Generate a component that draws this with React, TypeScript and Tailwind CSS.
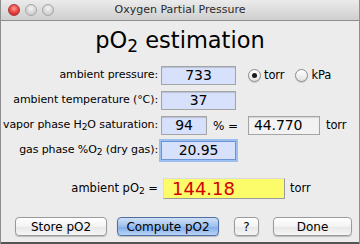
import React from "react";

const font = { fontFamily: '"DejaVu Sans", "Liberation Sans", sans-serif' };

function Light({ color }: { color: "red" | "grey" }) {
  return (
    <div
      className={
        color === "red"
          ? "w-[12px] h-[12px] rounded-full border border-[#b0373a] bg-[radial-gradient(circle_at_50%_35%,#ff9c94_0%,#e3413c_55%,#b41c1e_100%)]"
          : "w-[12px] h-[12px] rounded-full border border-[#a6a6a6] bg-[radial-gradient(circle_at_50%_35%,#f4f4f4_0%,#d4d4d4_60%,#bdbdbd_100%)]"
      }
    />
  );
}

function Field({ value, w, focus }: { value: string; w: string; focus?: boolean }) {
  return (
    <div
      className={
        "h-[19px] flex items-center justify-center text-[14px] text-black bg-[#d7e1fb] border " +
        w +
        (focus
          ? " border-[#6d95d4] shadow-[0_0_0_2px_#9cbff0]"
          : " border-[#a4a4a4] shadow-[inset_0_1px_1px_rgba(0,0,0,0.15)]")
      }
    >
      {value}
    </div>
  );
}

function Radio({ on, label }: { on?: boolean; label: string }) {
  return (
    <div className="flex items-center gap-[3px]">
      <div className="w-[13px] h-[13px] rounded-full border border-[#8b8b8b] bg-[linear-gradient(#ffffff,#e2e2e2)] flex items-center justify-center shadow-[0_1px_1px_rgba(0,0,0,0.15)]">
        {on && <div className="w-[5px] h-[5px] rounded-full bg-[#1a1a1a]" />}
      </div>
      <span className="text-[11.5px] text-black">{label}</span>
    </div>
  );
}

function Btn({ label, w, blue }: { label: string; w: string; blue?: boolean }) {
  return (
    <div
      className={
        "h-[19px] rounded-[4px] flex items-center justify-center text-[12px] text-black border " +
        w +
        (blue
          ? " border-[#4f6fa3] bg-[linear-gradient(#cfe0f7_0%,#9ebfec_50%,#84adea_55%,#b8d4f7_100%)]"
          : " border-[#9a9a9a] bg-[linear-gradient(#ffffff_0%,#f3f3f3_50%,#e8e8e8_55%,#f6f6f6_100%)]") +
        " shadow-[0_1px_1px_rgba(0,0,0,0.2)]"
      }
    >
      {label}
    </div>
  );
}

export default function App() {
  return (
    <div style={font} className="w-[360px] h-[244px] bg-[#ececec] overflow-hidden flex flex-col border-l border-r border-[#8d8d8d]">
      <div className="h-[21px] shrink-0 grid grid-cols-[1fr_auto_1fr] items-center bg-[linear-gradient(#ebebeb,#cfcfcf)] border-b border-[#8e8e8e] rounded-t-[4px]">
        <div className="flex items-center gap-[5px] pl-[7px]">
          <Light color="red" />
          <Light color="grey" />
          <Light color="grey" />
        </div>
        <div className="text-[11px] text-[#2a2a2a]">Oxygen Partial Pressure</div>
        <div />
      </div>

      <div className="h-[37px] flex items-center justify-center text-[22.5px] text-black leading-none pt-[2px]">
        <span>
          pO<sub className="text-[17px] relative top-[4px] align-baseline">2</sub> estimation
        </span>
      </div>

      <div className="grid grid-cols-[157px_1fr] gap-x-[3px] gap-y-[6px] mt-[8px] items-center text-[11px] tracking-[-0.1px] text-black">
        <div className="text-right">ambient pressure:</div>
        <div className="flex items-center">
          <Field value="733" w="w-[75px]" />
          <div className="flex items-center gap-[11px] ml-[12px]">
            <Radio on label="torr" />
            <Radio label="kPa" />
          </div>
        </div>

        <div className="text-right">ambient temperature (°C):</div>
        <div className="flex items-center">
          <Field value="37" w="w-[75px]" />
        </div>

        <div className="text-right whitespace-nowrap">
          vapor phase H<sub className="text-[9px] relative top-[2px] align-baseline">2</sub>O saturation:
        </div>
        <div className="flex items-center">
          <Field value="94" w="w-[46px]" />
          <span className="ml-[6px] text-[12px]">% =</span>
          <div className="ml-[10px] w-[72px] h-[19px] flex items-center pl-[5px] text-[14px] bg-[#f2f2f2] border border-[#a4a4a4] shadow-[inset_0_1px_1px_rgba(0,0,0,0.12)]">
            44.770
          </div>
          <span className="ml-[6px] text-[11.5px]">torr</span>
        </div>

        <div className="text-right whitespace-nowrap">
          gas phase %O<sub className="text-[9px] relative top-[2px] align-baseline">2</sub> (dry gas):
        </div>
        <div className="flex items-center">
          <Field value="20.95" w="w-[75px]" focus />
        </div>
      </div>

      <div className="grid grid-cols-[157px_1fr] gap-x-[5px] mt-[18px] items-center text-[11.5px] text-black">
        <div className="text-right">
          ambient pO<sub className="text-[9px] relative top-[2px] align-baseline">2</sub> =
        </div>
        <div className="flex items-center">
          <div className="w-[122px] h-[21px] flex items-center pl-[8px] text-[18px] text-[#d40000] bg-[#fcfc6a] border border-[#9a9a9a] border-l-[#dcdcdc] border-t-[#dcdcdc]">
            144.18
          </div>
          <span className="ml-[5px]">torr</span>
        </div>
      </div>

      <div className="flex items-center mt-[18px] pl-[14px]">
        <Btn label="Store pO2" w="w-[92px]" />
        <div className="ml-[10px]"><Btn label="Compute pO2" w="w-[102px]" blue /></div>
        <div className="ml-[15px]"><Btn label="?" w="w-[25px]" /></div>
        <div className="ml-[14px]"><Btn label="Done" w="w-[79px]" /></div>
      </div>
      <div className="flex-1" />
      <div className="h-[2px] bg-[#555]" />
    </div>
  );
}
